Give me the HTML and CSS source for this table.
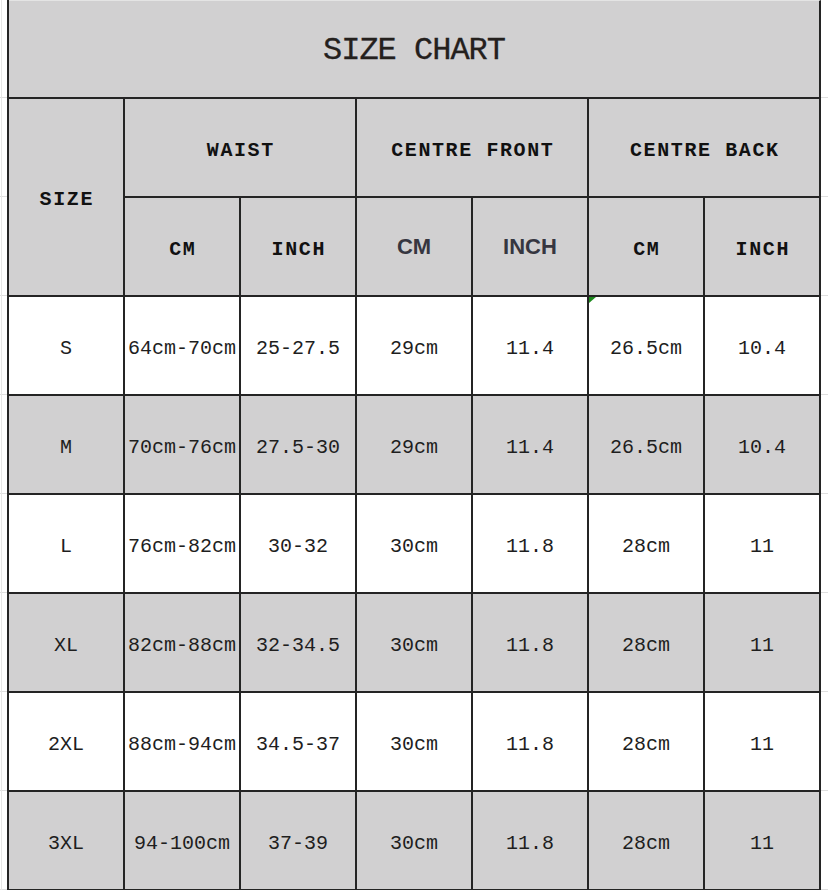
FILE: index.html
```html
<!DOCTYPE html>
<html lang="en">
<head>
<meta charset="utf-8">
<title>Size Chart</title>
<link rel="stylesheet" href="styles.css">
</head>
<body>
<div class="chart">
  <div class="cell title">SIZE CHART</div>

  <div class="cell head size-head">SIZE</div>
  <div class="cell head group">WAIST</div>
  <div class="cell head group">CENTRE FRONT</div>
  <div class="cell head group">CENTRE BACK</div>

  <div class="cell head">CM</div>
  <div class="cell head">INCH</div>
  <div class="cell head sans">CM</div>
  <div class="cell head sans">INCH</div>
  <div class="cell head">CM</div>
  <div class="cell head">INCH</div>

  <div class="cell">S</div>
  <div class="cell">64cm-70cm</div>
  <div class="cell">25-27.5</div>
  <div class="cell">29cm</div>
  <div class="cell">11.4</div>
  <div class="cell flag">26.5cm</div>
  <div class="cell">10.4</div>

  <div class="cell alt">M</div>
  <div class="cell alt">70cm-76cm</div>
  <div class="cell alt">27.5-30</div>
  <div class="cell alt">29cm</div>
  <div class="cell alt">11.4</div>
  <div class="cell alt">26.5cm</div>
  <div class="cell alt">10.4</div>

  <div class="cell">L</div>
  <div class="cell">76cm-82cm</div>
  <div class="cell">30-32</div>
  <div class="cell">30cm</div>
  <div class="cell">11.8</div>
  <div class="cell">28cm</div>
  <div class="cell">11</div>

  <div class="cell alt">XL</div>
  <div class="cell alt">82cm-88cm</div>
  <div class="cell alt">32-34.5</div>
  <div class="cell alt">30cm</div>
  <div class="cell alt">11.8</div>
  <div class="cell alt">28cm</div>
  <div class="cell alt">11</div>

  <div class="cell">2XL</div>
  <div class="cell">88cm-94cm</div>
  <div class="cell">34.5-37</div>
  <div class="cell">30cm</div>
  <div class="cell">11.8</div>
  <div class="cell">28cm</div>
  <div class="cell">11</div>

  <div class="cell alt">3XL</div>
  <div class="cell alt">94-100cm</div>
  <div class="cell alt">37-39</div>
  <div class="cell alt">30cm</div>
  <div class="cell alt">11.8</div>
  <div class="cell alt">28cm</div>
  <div class="cell alt">11</div>
</div>
</body>
</html>
```

FILE: styles.css
```css
html {
  background-color: #ffffff;
  background-image:
    linear-gradient(to right, transparent 1px, #e6e6e6 1px, #e6e6e6 2px, transparent 2px),
    repeating-linear-gradient(to bottom, transparent 0, transparent 97px, #dedede 97px, #dedede 98px, transparent 98px, transparent 99px);
}

body {
  margin: 0;
  height: 890px;
  overflow: hidden;
}

.chart {
  margin-left: 7px;
  width: 814px;
  display: grid;
  grid-template-columns: repeat(7, 116px);
  grid-auto-rows: 99px;
  border-left: 2px solid #242424;
  box-sizing: border-box;
  font-family: "Liberation Mono", "DejaVu Sans Mono", monospace;
  font-size: 20px;
  color: #1e1e1e;
}

.cell {
  position: relative;
  box-sizing: border-box;
  border-right: 2px solid #242424;
  border-bottom: 2px solid #242424;
  background: #ffffff;
  display: flex;
  align-items: center;
  justify-content: center;
  padding-top: 6px;
  white-space: pre;
  line-height: 1;
}

.title {
  grid-column: 1 / -1;
  background: #d1d0d1;
  border-top: 1px solid #e4e4e4;
  font-size: 32px;
  letter-spacing: -1px;
  color: #24201d;
  padding-top: 3px;
  -webkit-text-stroke: 0.3px #24201d;
}

.head {
  background: #d1d0d1;
  font-weight: bold;
  letter-spacing: 1.6px;
  color: #111111;
  padding-left: 1.6px;
}

.size-head {
  grid-row: span 2;
}

.group {
  grid-column: span 2;
}

.sans {
  font-family: "Liberation Sans", Arial, sans-serif;
  font-size: 22px;
  letter-spacing: 0;
  color: #363640;
  padding-left: 0;
  padding-top: 0;
}

.alt {
  background: #d1d0d1;
}

.flag::before {
  content: "";
  position: absolute;
  left: 0;
  top: 0;
  width: 7px;
  height: 6px;
  background: #1d8a1d;
  clip-path: polygon(0 0, 100% 0, 0 100%);
}
```
